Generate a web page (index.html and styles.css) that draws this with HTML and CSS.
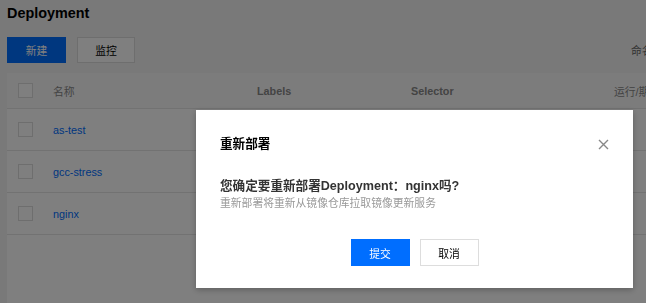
FILE: index.html
```html
<!DOCTYPE html>
<html lang="zh-CN">
<head>
<meta charset="utf-8">
<title>Deployment</title>
<link rel="stylesheet" href="styles.css">
</head>
<body>
<div class="page">
  <h1 class="page-title">Deployment</h1>
  <div class="toolbar">
    <button class="btn btn-primary">新建</button>
    <button class="btn">监控</button>
    <span class="ns-label">命名空间</span>
  </div>
  <div class="table">
    <div class="tr th">
      <div class="cell"><span class="checkbox"></span></div>
      <div class="cell">名称</div>
      <div class="cell">Labels</div>
      <div class="cell">Selector</div>
      <div class="cell">运行/期望Pod数量</div>
    </div>
    <div class="tr">
      <div class="cell"><span class="checkbox"></span></div>
      <div class="cell"><a class="link">as-test</a></div>
      <div class="cell"></div><div class="cell"></div><div class="cell"></div>
    </div>
    <div class="tr">
      <div class="cell"><span class="checkbox"></span></div>
      <div class="cell"><a class="link">gcc-stress</a></div>
      <div class="cell"></div><div class="cell"></div><div class="cell"></div>
    </div>
    <div class="tr">
      <div class="cell"><span class="checkbox"></span></div>
      <div class="cell"><a class="link">nginx</a></div>
      <div class="cell"></div><div class="cell"></div><div class="cell"></div>
    </div>
  </div>
</div>

<div class="mask"></div>
<div class="dialog">
  <div class="dialog-head">
    <h2 class="dialog-title">重新部署</h2>
    <svg class="close" width="11" height="11" viewBox="0 0 11 11"><path d="M1 1L10 10M10 1L1 10" stroke="#888" stroke-width="1.4" fill="none"/></svg>
  </div>
  <p class="question">您确定要重新部署Deployment：nginx吗?</p>
  <p class="sub">重新部署将重新从镜像仓库拉取镜像更新服务</p>
  <div class="dialog-foot">
    <button class="btn btn-primary btn-lg">提交</button>
    <button class="btn btn-lg">取消</button>
  </div>
</div>
</body>
</html>
```
FILE: styles.css
```css
html, body {
  margin: 0;
  padding: 0;
  width: 646px;
  height: 303px;
  overflow: hidden;
}
body {
  background: #f2f2f2;
  font-family: "Liberation Sans", "Noto Sans CJK SC", sans-serif;
  color: #000;
}
.page {
  padding: 3px 0 0 7px;
  width: 900px;
  height: 300px;
}
.page-title {
  margin: 0;
  font-size: 14.4px;
  line-height: 20px;
  font-weight: bold;
  color: #000;
}
.toolbar {
  display: flex;
  align-items: center;
  gap: 11px;
  margin-top: 14px;
  width: 639px;
  position: relative;
}
.ns-label {
  margin-left: auto;
  margin-right: -27px;
  font-size: 10.8px;
  color: #666;
  white-space: nowrap;
  width: 42px;
  overflow: hidden;
}
.btn {
  box-sizing: border-box;
  height: 26px;
  width: 58px;
  border: 1px solid #ddd;
  background: #fff;
  color: #000;
  font-family: inherit;
  font-size: 10.8px;
  padding: 0;
  margin: 0;
}
.btn-primary {
  background: #006eff;
  border-color: #006eff;
  color: #fff;
  width: 59px;
}
.table {
  margin-top: 10px;
  background: #fff;
  height: 240px;
}
.tr {
  display: grid;
  grid-template-columns: 46px 204px 154px 203px 200px;
  height: 41px;
  border-bottom: 1px solid #e5e5e5;
  align-items: center;
  font-size: 10.8px;
}
.tr.th {
  height: 35px;
  color: #888;
  background: #f9f9f9;
  font-weight: bold;
}
.th .cell:nth-child(2) { font-weight: normal; }
.th .cell:nth-child(5) { font-weight: normal; white-space: nowrap; }
.cell {
  display: flex;
  align-items: center;
}
.checkbox {
  box-sizing: border-box;
  display: block;
  width: 15px;
  height: 15px;
  border: 1px solid #ddd;
  background: #fff;
  margin-left: 11px;
}
.link {
  color: #006eff;
  text-decoration: none;
}
.mask {
  position: fixed;
  inset: 0;
  background: rgba(0, 0, 0, 0.5);
}
.dialog {
  position: fixed;
  left: 196px;
  top: 110px;
  width: 437px;
  height: 178px;
  box-sizing: border-box;
  background: #fff;
  padding: 24px 24px 22px;
  box-shadow: 0 2px 6px rgba(0, 0, 0, 0.25);
  display: flex;
  flex-direction: column;
}
.dialog-head {
  display: flex;
  align-items: center;
  justify-content: space-between;
  height: 20px;
}
.dialog-title {
  margin: 0;
  font-size: 12.6px;
  line-height: 20px;
  font-weight: bold;
  color: #000;
}
.close {
  display: block;
}
.question {
  margin: 23px 0 0;
  font-size: 12.6px;
  line-height: 18px;
  font-weight: bold;
  color: #333;
}
.sub {
  margin: 0;
  font-size: 10.8px;
  line-height: 16px;
  color: #999;
}
.dialog-foot {
  margin-top: 28px;
  display: flex;
  justify-content: center;
  gap: 10px;
}
.btn-lg {
  height: 27px;
  width: 59px;
}
```
